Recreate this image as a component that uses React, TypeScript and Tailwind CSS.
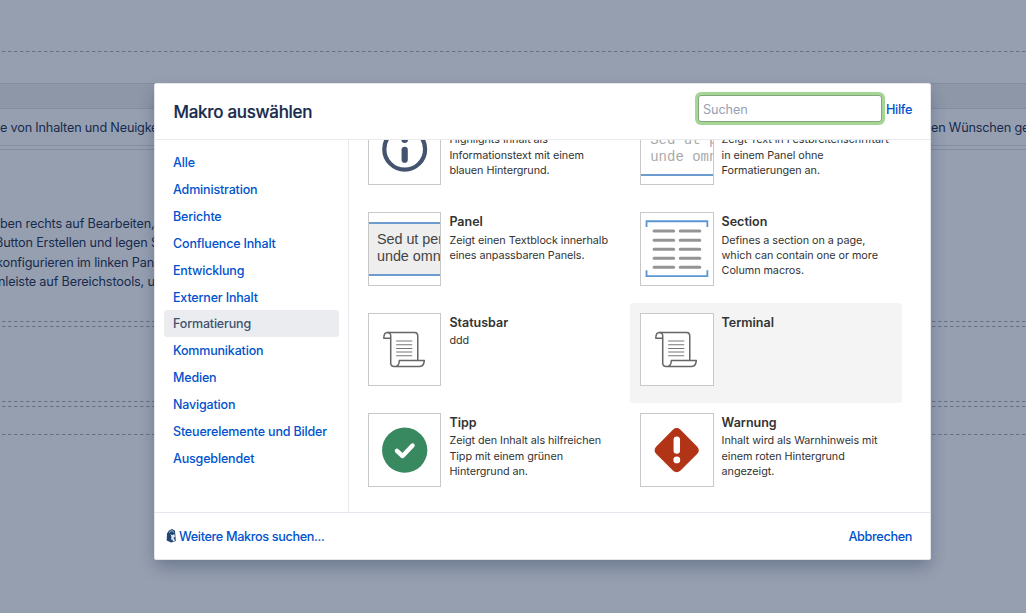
import type { ReactNode } from "react";

const categories = [
  "Alle",
  "Administration",
  "Berichte",
  "Confluence Inhalt",
  "Entwicklung",
  "Externer Inhalt",
  "Formatierung",
  "Kommunikation",
  "Medien",
  "Navigation",
  "Steuerelemente und Bilder",
  "Ausgeblendet",
];

function DashedLine() {
  return (
    <div className="h-px w-full shrink-0 bg-[repeating-linear-gradient(90deg,transparent_0_2px,#667085_2px_5px,#8089a0_5px_6px)]" />
  );
}

function InfoIcon() {
  return (
    <svg className="size-full" viewBox="0 0 71 71" fill="none">
      <circle cx="35.5" cy="36" r="20.3" stroke="#44546f" strokeWidth="4.2" />
      <rect x="32.4" y="33.5" width="6.2" height="16" rx="3.1" fill="#44546f" />
      <circle cx="35.5" cy="26.5" r="3.3" fill="#44546f" />
    </svg>
  );
}

function TipIcon() {
  return (
    <svg className="size-full" viewBox="0 0 71 71" fill="none">
      <circle cx="35.5" cy="36" r="22.5" fill="#388860" />
      <path d="M27.8 36.6l5.6 5.2 9.9-10.5" stroke="#fff" strokeWidth="4.4" strokeLinecap="round" strokeLinejoin="round" />
    </svg>
  );
}

function WarningIcon() {
  return (
    <svg className="size-full" viewBox="0 0 71 71" fill="none">
      <rect x="18.500" y="19" width="34" height="34" rx="5" transform="rotate(45 35.5 36)" fill="#b23417" />
      <rect x="32.4" y="22.5" width="6.4" height="17" rx="3.2" fill="#fff" />
      <circle cx="35.6" cy="45.7" r="3.4" fill="#fff" />
    </svg>
  );
}

function ScrollIcon() {
  return (
    <svg className="size-full" viewBox="0 0 71 71" fill="none" stroke="#666" strokeWidth="1.5" strokeLinejoin="round">
      <path d="M21.500 24h-6.800c0-3.600 1.200-5.700 3.600-5.700h27c2 0 3.200 1.400 3.200 3.700v24.200" />
      <path d="M18.300 18.300c2.200 0 3.300 1.300 3.300 3.600v26.800c0 2.200 1.300 3.400 3.600 3.400h25.400c2.500 0 4-2 4.400-5.800H30.200c-.2 3.800-1.400 5.800-3.800 5.800" />
      <path d="M27 26.800h16M27 30.500h16M27 34.200h16M27 37.900h16M27 41.600h16" strokeWidth="1" stroke="#777" />
    </svg>
  );
}

function SectionIcon() {
  return (
    <svg className="size-full" viewBox="0 0 71 71" fill="none">
      <path d="M5.500 14V8.200h60.500V14M5.500 57v5.700h60.500V57" stroke="#5c96d3" strokeWidth="1.800" />
      <path
        d="M13 18h19.500M13 27h19.500M13 36h19.500M13 45h19.500M13 54h19.500M39 18h19.500M39 27h19.500M39 36h19.500M39 45h19.500M39 54h19.500"
        stroke="#949494"
        strokeWidth="3"
        strokeLinecap="round"
      />
    </svg>
  );
}

function PanelPreview() {
  return (
    <div className="flex h-full flex-col pt-[9px]">
      <div className="h-[54px] overflow-hidden border-y-2 border-[#6a9cd0] bg-[#eeeeee] pt-[7px] pl-[8px] font-['Liberation_Sans',sans-serif] text-[14.400px] leading-[17px] tracking-[-0.050px] whitespace-nowrap text-[#444]">
        Sed ut per
        <br />
        unde omni
      </div>
    </div>
  );
}

function NoFormatPreview() {
  return (
    <div className="flex h-full flex-col pt-[9px]">
      <div className="h-[54px] overflow-hidden border-y-2 border-[#6a9cd0] bg-white pt-[8px] pl-[9px] font-['Liberation_Mono',monospace] text-[14px] leading-[17px] whitespace-nowrap text-[#aaa]">
        Sed ut p
        <br />
        unde omn
      </div>
    </div>
  );
}

type Macro = { title: string; lines: string[]; icon: ReactNode; active?: boolean };

const macros: Macro[] = [
  { title: "Info", lines: ["Highlights Inhalt als", "Informationstext mit einem", "blauen Hintergrund."], icon: <InfoIcon /> },
  { title: "Kein Format", lines: ["Zeigt Text in Festbreitenschriftart", "in einem Panel ohne", "Formatierungen an."], icon: <NoFormatPreview /> },
  { title: "Panel", lines: ["Zeigt einen Textblock innerhalb", "eines anpassbaren Panels."], icon: <PanelPreview /> },
  { title: "Section", lines: ["Defines a section on a page,", "which can contain one or more", "Column macros."], icon: <SectionIcon /> },
  { title: "Statusbar", lines: ["ddd"], icon: <ScrollIcon /> },
  { title: "Terminal", lines: [], icon: <ScrollIcon />, active: true },
  { title: "Tipp", lines: ["Zeigt den Inhalt als hilfreichen", "Tipp mit einem grünen", "Hintergrund an."], icon: <TipIcon /> },
  { title: "Warnung", lines: ["Inhalt wird als Warnhinweis mit", "einem roten Hintergrund", "angezeigt."], icon: <WarningIcon /> },
];

function MacroCard({ macro }: { macro: Macro }) {
  return (
    <li className={`flex h-[100.400px] gap-2 rounded-[3px] p-[10px] pr-0 ${macro.active ? "bg-[#f4f4f4]" : ""}`}>
      <div className="h-[73.400px] w-[73.400px] shrink-0 overflow-hidden border border-[#c8c8c8] bg-white">{macro.icon}</div>
      <div className="whitespace-nowrap text-[#333]">
        <h3 className="text-[12.500px] leading-[19.500px] font-semibold">{macro.title}</h3>
        <p className="pt-[0.700px] text-[10.800px] leading-[15.400px] tracking-[-0.050px]">
          {macro.lines.map((line) => (
            <span key={line} className="block">
              {line}
            </span>
          ))}
        </p>
      </div>
    </li>
  );
}

function PageBehind() {
  return (
    <div className="flex h-full flex-col text-[12.700px] tracking-[-0.200px] text-[#172b4d]">
      <div className="h-[51px]" />
      <DashedLine />
      <div className="h-[31px]" />
      <div className="h-[26px] border-y border-[#838d9f] bg-[#8d97a8]" />
      <div className="flex h-[36px] items-center justify-between overflow-hidden pt-[2px] whitespace-nowrap">
        <span>e von Inhalten und Neuigke</span>
        <span className="w-[95px]">en Wünschen ge</span>
      </div>
      <div className="h-[5px] border-y border-[#838d9f]" />
      <div className="h-[63.500px]" />
      <div className="h-[77.500px] leading-[19.600px] tracking-[-0.170px] whitespace-nowrap">
        <div>ben rechts auf Bearbeiten,</div>
        <div className="-ml-[5px]">Button Erstellen und legen S</div>
        <div className="-ml-[4px]">konfigurieren im linken Pane</div>
        <div className="-ml-[2px]">nleiste auf Bereichstools, u</div>
      </div>
      <div className="h-[30px]" />
      <DashedLine />
      <div className="h-[4px]" />
      <DashedLine />
      <div className="h-[74px]" />
      <DashedLine />
      <div className="h-[4px]" />
      <DashedLine />
      <div className="h-[27px]" />
      <DashedLine />
    </div>
  );
}

export default function App() {
  return (
    <div className="relative h-[613px] w-[1026px] overflow-hidden bg-[#969fb0] font-['Inter',sans-serif]">
      <PageBehind />
      <div
        role="dialog"
        className="absolute top-[83px] left-[154px] flex h-[477px] w-[777px] flex-col rounded-[2px] border border-[#e3e5ea] bg-white shadow-[0_8px_16px_-2px_rgba(9,30,66,0.32)]"
      >
        <header className="flex h-[56px] shrink-0 items-center border-b border-[#e8eaed] pr-[18px] pl-[18.500px]">
          <h2 className="flex-1 pt-[3px] text-[17px] font-medium tracking-[-0.300px] text-[#172b4d] [-webkit-text-stroke:0.2px_#172b4d]">
            Makro auswählen
          </h2>
          <input
            placeholder="Suchen"
            className="mt-[-6px] h-[27px] w-[184px] rounded-[3px] border border-[#83a67c] bg-white px-1 pt-[2px] text-[12.700px] tracking-[-0.100px] text-[#172b4d] shadow-[0_0_0_3px_#a5d696] outline-none placeholder:text-[#97a0b3]"
          />
          <a className="mt-[-3px] ml-1 text-[12.700px] font-medium tracking-[-0.360px] text-[#0052cc]">Hilfe</a>
        </header>
        <div className="flex h-[372px] shrink-0 overflow-hidden">
          <nav className="w-[194px] shrink-0 border-r border-[#e8eaed] px-[9px] pt-[8.900px]">
            {categories.map((category) => (
              <a
                key={category}
                className={`flex h-[26.920px] items-center rounded-[3px] pt-[2px] pl-[9px] text-[12.500px] font-medium tracking-[-0.170px] whitespace-nowrap ${
                  category === "Formatierung" ? "bg-[#ebecf0] text-[#42526e]" : "text-[#0052cc]"
                }`}
              >
                {category}
              </a>
            ))}
          </nav>
          <ul className="-mt-[38.050px] ml-[9px] grid w-[544.200px] grid-cols-[272.200px_272px] content-start">
            {macros.map((macro) => (
              <MacroCard key={macro.title} macro={macro} />
            ))}
          </ul>
        </div>
        <footer className="flex flex-1 items-center justify-between border-t border-[#e4e7ee] pt-[2px] pr-[18px] pl-[11px] text-[12.700px] font-medium tracking-[-0.370px] text-[#0052cc]">
          <a className="flex items-center gap-[2px]">
            <svg className="-mt-[2px]" width="11" height="15" viewBox="0 0 11 15">
              <path d="M1 5.500L3 2.500l3-1.500 3 1.800.8 10.200-4.800 1.500L.7 12.500z" fill="#204473" />
              <path d="M3.500 4.500C4 2.500 7 2.200 7.800 4.500" fill="none" stroke="#c9d4e0" strokeWidth="1" />
              <path d="M4.500 6l1.800 1.300L8.200 6l.8 2.500-1.500 1.300 1.500 3-2 .5-1-2.600-1.300 2L5.500 9z" fill="#e8eef4" />
            </svg>
            Weitere Makros suchen...
          </a>
          <a>Abbrechen</a>
        </footer>
      </div>
    </div>
  );
}
